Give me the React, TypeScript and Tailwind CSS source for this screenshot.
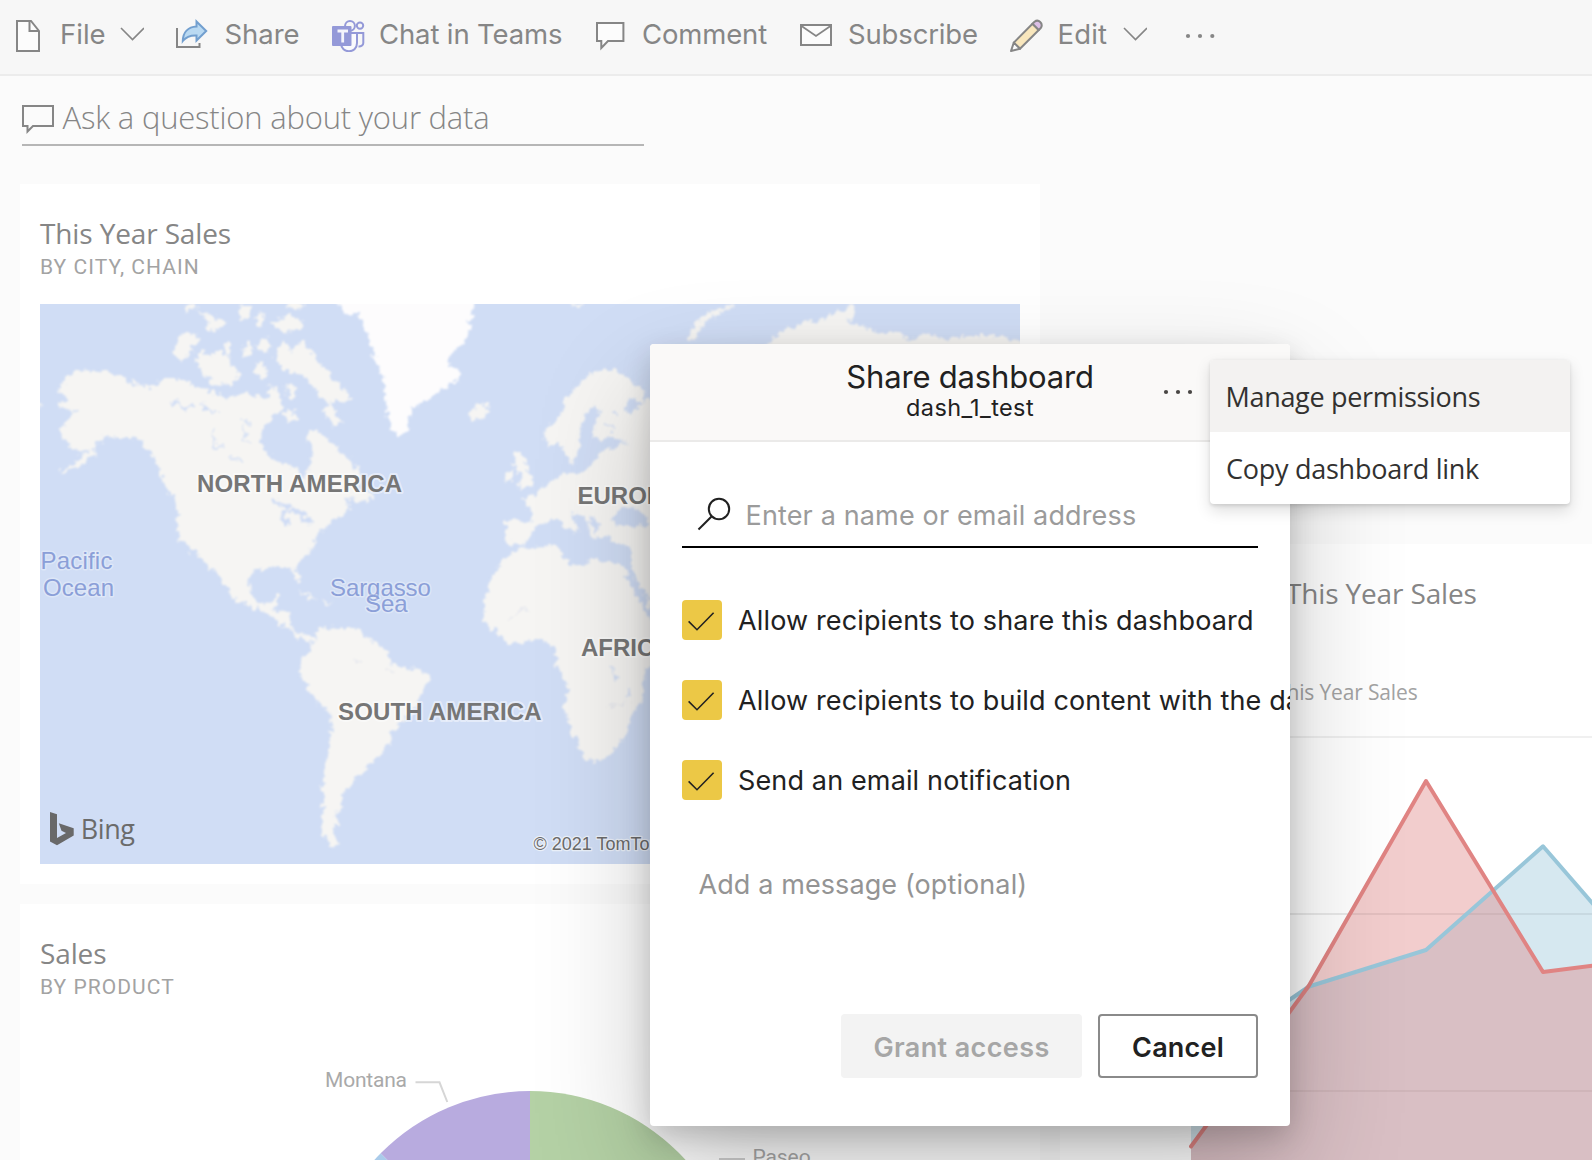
import React from "react";

const INK = "#868686";

function Chevron() {
  return (
    <svg className="h-9 w-6 shrink-0" viewBox="120 16 24 36" fill="none" stroke={INK} strokeWidth="1.6">
      <path d="M121 28 L132.5 39.6 L144 28" />
    </svg>
  );
}

function FileIcon() {
  return (
    <svg className="h-9 w-[26px] shrink-0" viewBox="16 16 26 36" fill="none" stroke={INK} strokeWidth="2">
      <path d="M17 21 H31 L39 31 V51 H17 Z" fill="#fcfcfc" />
      <path d="M29.5 21 V31 H39" />
    </svg>
  );
}

function ShareIcon() {
  return (
    <svg className="h-9 w-[34px] shrink-0" viewBox="175 16 34 36" fill="none">
      <path d="M177 28 V47 H199.5 V43" stroke={INK} strokeWidth="2" />
      <path
        d="M196.5 21.5 L206.2 31 L196.5 40.5 V35.5 C190 35.2 186 37 182.8 41 C183 32.5 188 27 196.5 26.6 Z"
        fill="#b9d9f2"
        stroke="#729fcf"
        strokeWidth="2"
      />
    </svg>
  );
}

function TeamsIcon() {
  return (
    <svg className="h-9 w-9 shrink-0" viewBox="330 16 36 36" fill="none" stroke="#9499d8" strokeWidth="2">
      <circle cx="360" cy="25.6" r="3.2" />
      <path d="M357 33 H363.3 V43 C363.3 45.5 361 46.6 358.5 46.4" />
      <circle cx="350" cy="25.8" r="4.9" />
      <path d="M341 33 H357 V43 C357 54 341 54 341 43 Z" fill="#fafafd" />
      <rect x="332" y="26" width="19.5" height="20" rx="1" fill="#9499d8" stroke="none" />
      <path d="M337.5 31 H348 M342.7 31 V42.5" stroke="#f4f4fb" strokeWidth="2.8" />
    </svg>
  );
}

function CommentIcon() {
  return (
    <svg className="h-9 w-8 shrink-0" viewBox="594 16 32 36" fill="#fcfcfc" stroke={INK} strokeWidth="2">
      <path d="M597 23 H623.4 V41 H608 L601.3 48 V41 H597 Z" />
    </svg>
  );
}

function MailIcon() {
  return (
    <svg className="h-9 w-9 shrink-0" viewBox="798 16 36 36" fill="#fcfcfc" stroke={INK} strokeWidth="2">
      <rect x="801" y="25" width="30" height="20" />
      <path d="M801.5 26 L816 36 L830.5 26" fill="none" strokeWidth="1.8" />
    </svg>
  );
}

function PencilIcon() {
  return (
    <svg className="h-9 w-9 shrink-0" viewBox="1008 16 36 36" stroke={INK} strokeWidth="2" strokeLinejoin="round">
      <path d="M1032.5 23.8 L1038.8 30 L1020 48.8 L1013.8 42.6 Z" fill="#f9e7bd" />
      <path d="M1013.8 42.6 L1020 48.8 L1011 51 Z" fill="#fcfcfc" />
      <path d="M1032.5 23.8 L1034.5 21.8 C1038.5 18.6 1043.6 23.6 1040.8 28 L1038.8 30 Z" fill="#dcbfe6" />
    </svg>
  );
}

const label = "shrink-0 text-[27.5px] leading-[34px] text-[#868686]";

function Toolbar() {
  return (
    <div className="flex h-[76px] items-center border-b-2 border-[#ececec] bg-[#f7f7f7] pb-1.5 pl-4 whitespace-nowrap">
      <div className="flex w-[159px] shrink-0 items-center">
        <FileIcon />
        <span className={`${label} ml-[18px] w-[60px]`}>File</span>
        <Chevron />
      </div>
      <div className="flex w-[155px] shrink-0 items-center">
        <ShareIcon />
        <span className={`${label} ml-[15.5px] tracking-[-0.06px]`}>Share</span>
      </div>
      <div className="flex w-[264px] shrink-0 items-center">
        <TeamsIcon />
        <span className={`${label} ml-[13px] tracking-[-0.13px]`}>Chat in Teams</span>
      </div>
      <div className="flex w-[204px] shrink-0 items-center">
        <CommentIcon />
        <span className={`${label} ml-4 tracking-[-0.15px]`}>Comment</span>
      </div>
      <div className="flex w-[210px] shrink-0 items-center">
        <MailIcon />
        <span className={`${label} ml-3.5 tracking-[-0.15px]`}>Subscribe</span>
      </div>
      <div className="flex w-[176px] shrink-0 items-center">
        <PencilIcon />
        <span className={`${label} ml-[13.5px] w-[65px] tracking-[0.15px]`}>Edit</span>
        <Chevron />
      </div>
      <svg className="h-9 w-8 shrink-0" viewBox="1184 16 32 36" fill={INK}>
        <circle cx="1188" cy="36" r="2.1" />
        <circle cx="1200" cy="36" r="2.1" />
        <circle cx="1212.3" cy="36" r="2.1" />
      </svg>
    </div>
  );
}

const LAND: string[] = [
  // North America
  "58,388 72,374 85,369 100,371 120,376 135,384 146,388 150,386 165,378 180,378 195,386 210,391 225,397 245,393 265,398 272,384 280,396 284,408 270,418 262,432 260,444 268,456 280,462 296,468 300,476 308,474 314,452 308,440 310,430 322,432 332,444 345,454 352,462 360,478 355,490 366,486 372,500 356,502 345,498 350,508 345,514 335,520 325,528 316,534 313,548 300,560 296,568 301,580 298,582 292,568 275,566 256,570 249,580 250,592 258,603 270,602 278,595 280,600 273,610 288,612 292,620 290,628 298,632 306,635 314,637 312,642 300,638 284,626 272,616 262,612 245,604 231,598 228,588 210,566 203,562 195,552 188,547 180,540 177,530 178,508 176,500 168,492 162,480 160,470 150,452 140,440 130,438 118,438 106,436 92,448 80,454 70,444 60,436 58,430 70,420 75,412 65,408 55,404 68,400 62,394",
  "92,448 96,454 78,466 64,474 60,472 78,460",
  "40,402 44,406 40,410",
  // Arctic islands
  "174,354 178,336 188,333 198,338 192,352 181,362",
  "194,358 204,350 208,358 218,350 226,356 229,364 240,374 232,386 212,384 202,372",
  "224,344 230,342 230,356 226,354",
  "244,344 250,340 253,350 246,361 242,354",
  "258,342 268,336 271,348 262,352",
  "256,362 264,360 267,374 260,378 254,372",
  "276,350 284,340 290,352 300,342 312,350 316,362 328,370 334,382 342,388 352,400 344,404 334,398 332,406 341,420 336,428 323,414 330,404 318,394 308,380 296,372 284,370 276,360",
  "286,386 294,384 296,396 290,400",
  "270,322 282,318 292,314 302,322 298,330 280,331",
  "196,310 206,314 216,318 228,322 222,328 210,332 208,322",
  "184,306 194,304 198,306 186,314",
  "284,304 304,304 306,308 292,310",
  "240,306 250,306 250,316 242,322",
  "256,316 262,312 264,322 258,326",
  "283,412 292,411 298,419 288,421",
  // Caribbean
  "298,591 310,594 317,600 308,598",
  "321,600 332,602 326,605",
  // Iceland
  "468,415 475,406 486,403 490,410 482,420 472,421",
  // South America
  "306,635 313,637 320,630 325,627 340,628 355,628 365,636 380,645 388,655 392,664 410,668 425,672 430,678 424,688 418,700 414,712 400,722 393,730 390,742 380,756 372,762 366,768 362,776 352,780 350,788 342,794 342,806 335,816 338,822 332,832 334,840 341,845 330,844 322,832 322,815 324,800 322,785 328,755 332,730 330,712 318,703 308,690 300,672 303,660 310,648 314,640",
  // Africa
  "510,556 520,548 548,546 560,547 562,558 575,565 585,566 590,560 605,562 620,563 626,568 636,590 646,606 654,618 700,618 700,650 654,655 648,668 643,680 643,700 630,715 629,730 618,745 608,758 595,762 585,760 578,745 570,725 563,705 568,695 566,680 556,665 556,648 540,640 525,642 510,644 495,632 485,620 483,605 487,590 495,572",
  // Eurasia
  "505,525 503,522 520,520 530,522 533,512 526,502 522,498 535,495 548,484 562,474 580,472 590,468 594,458 610,445 626,444 612,436 630,420 634,408 645,400 700,390 700,618 654,614 646,600 634,574 631,562 631,548 625,545 610,541 606,534 594,542 590,530 586,520 576,514 570,512 574,520 580,530 574,532 560,522 554,520 540,524 530,534 526,544 514,546 505,540",
  "592,438 594,424 600,412 598,406 590,410 582,422 580,435 578,452 572,464 563,454 560,442 550,448 544,438 545,428 555,422 562,412 566,400 575,388 585,378 600,370 615,370 628,378 645,392 642,402 628,398 626,410 632,420 625,432 606,440",
  // British Isles
  "515,452 522,452 524,462 532,478 531,486 518,490 522,478 514,464",
  "505,474 513,470 513,480 504,484",
  // Svalbard
  "566,303 586,303 580,307",
  // Arctic Russia
  "688,338 696,322 712,310 736,304 730,308 706,320 694,340",
  "758,352 772,340 778,334 786,328 798,326 806,320 816,322 826,318 836,310 844,312 850,304 854,312 848,322 862,326 880,334 896,332 910,338 930,334 946,340 960,336 1000,336 1024,342 1024,360 762,360",
];

const WATER_OVER: string[] = [
  "610,520 620,508 634,508 650,522 644,526 622,528",
  "592,516 588,522 596,532 602,526",
];

const ICE =
  "335,296 338,306 346,314 358,314 366,330 372,350 380,370 386,392 387,415 391,430 397,435 407,435 410,422 412,408 425,402 440,390 455,382 462,372 448,364 452,352 464,345 470,325 476,296";

function WorldMap() {
  return (
    <svg className="mt-[25px] block h-[560px] w-[980px]" viewBox="40 304 980 560">
      <defs>
        <filter id="coast" x="-5%" y="-5%" width="110%" height="110%">
          <feTurbulence type="fractalNoise" baseFrequency="0.16" numOctaves="3" seed="4" result="n" />
          <feDisplacementMap in="SourceGraphic" in2="n" scale="12" xChannelSelector="R" yChannelSelector="G" />
          <feGaussianBlur stdDeviation="1.1" />
        </filter>
      </defs>
      <rect x="40" y="304" width="980" height="560" fill="#d0ddf5" />
      <g filter="url(#coast)">
        {LAND.map((p, i) => (
          <polygon key={i} points={p} fill="#f6f5f3" />
        ))}
        <polygon points={ICE} fill="#fdfcfd" />
        {WATER_OVER.map((p, i) => (
          <polygon key={i} points={p} fill="#d0ddf5" />
        ))}
        <g fill="none" stroke="#d0ddf5" strokeWidth="3.5" strokeLinecap="round">
          <path d="M272 501 L288 506 L282 516 L288 524 M292 510 L304 514 L302 522 M304 520 L312 522" />
          <path d="M174 402 L186 410 L194 406 M202 404 L212 414 L218 410" strokeWidth="3" />
          <path d="M214 430 L213 448 L222 444 M242 420 L252 424 M230 456 L242 462" strokeWidth="2" />
          <path d="M244 424 L244 440 L252 442" strokeWidth="1.5" />
          <path d="M628 576 L650 616 M612 448 L622 440" strokeWidth="4" />
          <path d="M638 586 L650 600" strokeWidth="2" />
          <path d="M613 668 L618 680 M627 688 L629 696" strokeWidth="2" />
          <path d="M606 424 L614 430 M612 412 L618 416 M450 360 L462 356" strokeWidth="2.5" />
        </g>
        <g fill="none" stroke="#e3e5ee" strokeWidth="1.5">
          <path d="M506 622 L518 612 L524 608 L530 614" />
          <path d="M608 708 L616 703 L628 703" />
          <path d="M354 661 L362 662 M384 668 L392 672" />
        </g>
      </g>
      <g
        fontFamily="'Liberation Sans', Arial, sans-serif"
        fontSize="24"
        stroke="#ffffff"
        strokeOpacity="0.45"
        strokeWidth="4"
        strokeLinejoin="round"
        style={{ paintOrder: "stroke" }}
      >
        <g fontWeight="700" fill="#767676">
          <text x="197" y="492" letterSpacing="0.17">NORTH AMERICA</text>
          <text x="338" y="720" letterSpacing="0.16">SOUTH AMERICA</text>
          <text x="577.5" y="503.5">EUROPE</text>
          <text x="581" y="656">AFRICA</text>
        </g>
        <g fill="#8b9fd8" strokeOpacity="0.3" strokeWidth="3">
          <text x="40.5" y="569" letterSpacing="0.2">Pacific</text>
          <text x="43" y="596" letterSpacing="0.1">Ocean</text>
          <text x="330" y="596" letterSpacing="-0.08">Sargasso</text>
          <text x="365" y="612">Sea</text>
        </g>
        <text x="533.5" y="850" fontSize="18" fill="#6b6b6b" strokeOpacity="0.6" strokeWidth="2.5">
          © 2021 TomTom
        </text>
      </g>
      <path d="M50 812 L57 814.3 V838 L66 833 L61.5 830.8 L58.8 823.3 L73.7 828.3 V835.6 L57 845.3 L50 841.5 Z" fill="#696969" />
      <text x="80.8" y="839" fontFamily="'Open Sans', 'Noto Sans', sans-serif" fontSize="27" letterSpacing="-0.45" fill="#6b6b6b">
        Bing
      </text>
    </svg>
  );
}

function CardTitle({ title, subtitle }: { title: string; subtitle: string }) {
  return (
    <>
      <h2 className="font-['Open_Sans'] text-[28px] leading-[38px] tracking-[-0.13px] text-[#868686]">{title}</h2>
      <p className="mt-[3px] font-['Roboto'] text-[21px] leading-6 tracking-[1.05px] text-[#a3a3a3]">{subtitle}</p>
    </>
  );
}

function PieChart() {
  return (
    <svg className="block h-[161px] w-[980px]" viewBox="40 999 980 161">
      <path d="M530 1301 L380.7 1153.3 A210 210 0 0 0 320 1301 Z" fill="#aacbea" />
      <path d="M530 1301 L530 1091 A210 210 0 0 0 380.7 1153.3 Z" fill="#b8abdf" />
      <path d="M530 1301 L530 1091 A210 210 0 0 1 740 1301 Z" fill="#b4d1a5" />
      <path d="M415.5 1082.3 H439.5 L447.3 1102" fill="none" stroke="#d6d6d6" strokeWidth="2" />
      <path d="M719 1159 H745" fill="none" stroke="#d0d0d0" strokeWidth="2" />
      <g fontFamily="Roboto, sans-serif" fontSize="21" fill="#a9a9a9">
        <text x="325" y="1087" letterSpacing="-0.2">Montana</text>
        <text x="752.5" y="1164" letterSpacing="-0.1">Paseo</text>
      </g>
    </svg>
  );
}

function AreaChart() {
  return (
    <svg className="block h-[454px] w-[532px]" viewBox="1060 706 532 454">
      <g stroke="#f0f0f0" strokeWidth="2">
        <path d="M1191 737 H1592" />
        <path d="M1191 914 H1592" />
        <path d="M1191 1091 H1592" />
      </g>
      <path d="M1191 1067 L1309 986.5 L1426 950 L1543 846.3 L1592 903 V1160 H1191 Z" fill="#98c6d9" fillOpacity="0.4" />
      <path d="M1191 1146.5 L1309 985.5 L1426 781 L1543 972 L1592 965.7 V1160 H1191 Z" fill="#df8182" fillOpacity="0.4" />
      <g stroke="#000000" strokeOpacity="0.025" strokeWidth="2">
        <path d="M1191 914 H1592" />
        <path d="M1191 1091 H1592" />
      </g>
      <g fill="none" strokeWidth="4" strokeLinejoin="round" strokeLinecap="round">
        <path d="M1191 1067 L1309 986.5 L1426 950 L1543 846.3 L1600 912" stroke="#98c6d9" />
        <path d="M1191 1146.5 L1309 985.5 L1426 781 L1543 972 L1600 964.7" stroke="#e08483" />
      </g>
    </svg>
  );
}

function CheckRow({ text }: { text: string }) {
  return (
    <label className="flex h-10 items-center whitespace-nowrap">
      <span className="flex size-10 shrink-0 items-center justify-center rounded-[4px] bg-[#ecc846]">
        <svg className="size-10" viewBox="0 0 40 40" fill="none" stroke="#212121" strokeWidth="1.6">
          <path d="M6.6 21.4 L15 29.7 L31.6 12.8" />
        </svg>
      </span>
      <span className="ml-4 pt-px text-[27px] leading-[33px] tracking-[0.14px] text-[#212121]">{text}</span>
    </label>
  );
}

function ShareDialog() {
  return (
    <div className="absolute top-[344px] left-[650px] h-[782px] w-[640px] rounded-[4px] bg-white shadow-[0_51px_115px_rgba(0,0,0,0.22),0_10px_29px_rgba(0,0,0,0.18)]">
      <div className="h-full overflow-hidden rounded-[4px]">
        <div className="relative h-[98px] border-b-2 border-[#ebeae9] bg-[#faf9f8] pt-[15px] text-center text-[#212121]">
          <h1 className="text-[31px] leading-9 tracking-[-0.18px]">Share dashboard</h1>
          <p className="text-[23.5px] leading-[25px] tracking-[0.4px]">dash_1_test</p>
          <svg className="absolute top-10 left-[512px] h-4 w-8" viewBox="1162 384 32 16" fill="#484644">
            <circle cx="1166" cy="392" r="2.1" />
            <circle cx="1178" cy="392" r="2.1" />
            <circle cx="1190" cy="392" r="2.1" />
          </svg>
        </div>
        <div className="px-8 pt-[53px]">
          <div className="flex h-[53px] border-b-2 border-black">
            <svg className="h-[38px] w-[63.5px] shrink-0" viewBox="682 495 63.5 38" fill="none" stroke="#212121" strokeWidth="2">
              <circle cx="719" cy="509" r="10.2" />
              <path d="M711.8 516.2 L698.5 529.5" />
            </svg>
            <span className="pt-1 text-[27px] leading-[33px] tracking-[0.15px] text-[#9b9b9b]">Enter a name or email address</span>
          </div>
          <div className="mt-[52px] flex flex-col gap-10">
            <CheckRow text="Allow recipients to share this dashboard" />
            <CheckRow text="Allow recipients to build content with the data associated with this dashboard" />
            <CheckRow text="Send an email notification" />
          </div>
          <p className="mt-[68px] pl-[16.5px] text-[27px] leading-[33px] tracking-[0.1px] text-[#949494]">
            Add a message (optional)
          </p>
          <div className="mt-[113px] flex justify-end gap-4 text-[27px] leading-[33px] font-semibold">
            <button className="h-16 w-[241px] rounded-[4px] bg-[#f3f3f3] pt-[3px] tracking-[0.38px] text-[#a6a6a6]">
              Grant access
            </button>
            <button className="h-16 w-40 rounded-[4px] border-2 border-[#8a8a8a] bg-white pt-[3px] tracking-[0.2px] text-[#212121]">
              Cancel
            </button>
          </div>
        </div>
      </div>
    </div>
  );
}

function OptionsMenu() {
  return (
    <div className="absolute top-[360px] left-[1210px] w-[360px] rounded-[4px] bg-white font-['Open_Sans'] text-[27px] leading-[38px] text-[#323130] shadow-[0_6.4px_14.4px_rgba(0,0,0,0.13),0_1.2px_3.6px_rgba(0,0,0,0.11)]">
      <div className="flex h-[72px] items-center rounded-t-[4px] bg-[#f3f2f1] pt-0.5 pl-[15.5px] tracking-[-0.31px]">
        Manage permissions
      </div>
      <div className="flex h-[72px] items-center pt-0.5 pl-4 tracking-[-0.26px]">Copy dashboard link</div>
    </div>
  );
}

export default function App() {
  return (
    <div className="relative h-[1160px] w-[1592px] overflow-hidden bg-[#fbfbfb] font-['Inter'] font-normal">
      <Toolbar />
      <div className="mt-[19px] ml-[22px] flex h-[51px] w-[622px] border-b-2 border-[#b6b6b6]">
        <svg className="h-[42px] w-[40.5px] shrink-0" viewBox="22 95 40.5 42" fill="none" stroke={INK} strokeWidth="2">
          <path d="M23 106 H53 V126 H33 L27.5 131.5 V126 H23 Z" />
        </svg>
        <span className="pt-px font-['Open_Sans'] text-[31px] leading-[42px] font-[340] tracking-[-0.2px] whitespace-nowrap text-[#868686]">
          Ask a question about your data
        </span>
      </div>
      <div className="mt-[38px] ml-5 flex items-start gap-5">
        <div className="flex w-[1020px] shrink-0 flex-col gap-5">
          <section className="h-[700px] bg-white px-5 pt-[30px]">
            <CardTitle title="This Year Sales" subtitle="BY CITY, CHAIN" />
            <WorldMap />
          </section>
          <section className="h-[700px] bg-white px-5 pt-[30px]">
            <CardTitle title="Sales" subtitle="BY PRODUCT" />
            <PieChart />
          </section>
        </div>
        <section className="mt-[360px] h-[700px] w-[532px] shrink-0 bg-white pt-[30px]">
          <h2 className="pl-[226px] font-['Open_Sans'] text-[28px] leading-[38px] tracking-[-0.15px] text-[#868686]">
            This Year Sales
          </h2>
          <p className="mt-[66px] pl-[215px] font-['Open_Sans'] text-[21px] leading-7 tracking-[-0.15px] text-[#a3a3a3]">
            This Year Sales
          </p>
          <AreaChart />
        </section>
      </div>
      <ShareDialog />
      <OptionsMenu />
    </div>
  );
}
